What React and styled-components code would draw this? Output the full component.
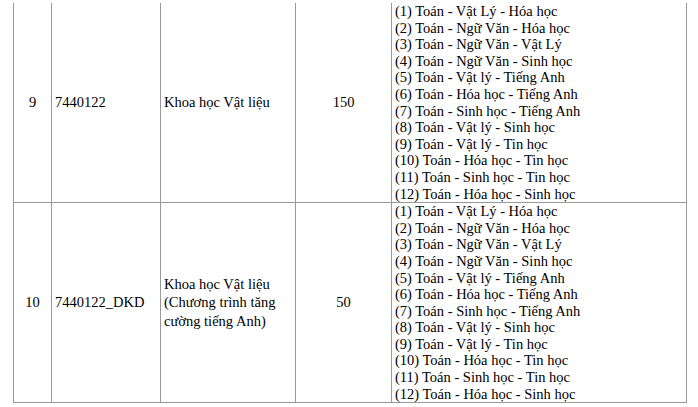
import React from "react";
import styled, { createGlobalStyle } from "styled-components";

const Global = createGlobalStyle`
  html, body { margin: 0; padding: 0; background: #fff; }
  body {
    font-family: "Liberation Serif", "Times New Roman", serif;
    color: #000;
  }
`;

const Page = styled.div`
  padding: 3px 0 0 13px;
`;

const Table = styled.table`
  border-collapse: collapse;
  table-layout: fixed;
  width: 673px;
  font-family: "Liberation Serif", "Times New Roman", serif;
  font-size: 14.5px;
  color: #000;
`;

const Col = styled.col`
  width: ${(p) => p.$w}px;
`;

const Row = styled.tr``;

const Cell = styled.td`
  border: 1px solid #999;
  border-top: ${(p) => (p.$first ? "none" : "1px solid #999")};
  padding: 0 3px;
  vertical-align: middle;
  text-align: ${(p) => p.$align || "left"};
  line-height: 18.5px;
  white-space: nowrap;
`;

const NameLine = styled.div``;

const ListLine = styled.div`
  line-height: 16.6px;
`;

const widths = [38, 109, 135, 96, 295];

const combos = [
  "(1) Toán - Vật Lý - Hóa học",
  "(2) Toán - Ngữ Văn - Hóa học",
  "(3) Toán - Ngữ Văn - Vật Lý",
  "(4) Toán - Ngữ Văn - Sinh học",
  "(5) Toán - Vật lý - Tiếng Anh",
  "(6) Toán - Hóa học - Tiếng Anh",
  "(7) Toán - Sinh học - Tiếng Anh",
  "(8) Toán - Vật lý - Sinh học",
  "(9) Toán - Vật lý - Tin học",
  "(10) Toán - Hóa học - Tin học",
  "(11) Toán - Sinh học - Tin học",
  "(12) Toán - Hóa học - Sinh học",
];

const rows = [
  { no: "9", code: "7440122", name: ["Khoa học Vật liệu"], quota: "150" },
  {
    no: "10",
    code: "7440122_DKD",
    name: ["Khoa học Vật liệu", "(Chương trình tăng", "cường tiếng Anh)"],
    quota: "50",
  },
];

export default function App() {
  return (
    <>
      <Global />
      <Page>
        <Table>
          <colgroup>
            {widths.map((w, i) => (
              <Col key={i} $w={w} />
            ))}
          </colgroup>
          <tbody>
            {rows.map((r, i) => (
              <Row key={r.no}>
                <Cell $first={i === 0} $align="center">{r.no}</Cell>
                <Cell $first={i === 0}>{r.code}</Cell>
                <Cell $first={i === 0}>
                  {r.name.map((n, k) => (
                    <NameLine key={k}>{n}</NameLine>
                  ))}
                </Cell>
                <Cell $first={i === 0} $align="center">{r.quota}</Cell>
                <Cell $first={i === 0}>
                  {combos.map((c) => (
                    <ListLine key={c}>{c}</ListLine>
                  ))}
                </Cell>
              </Row>
            ))}
          </tbody>
        </Table>
      </Page>
    </>
  );
}
